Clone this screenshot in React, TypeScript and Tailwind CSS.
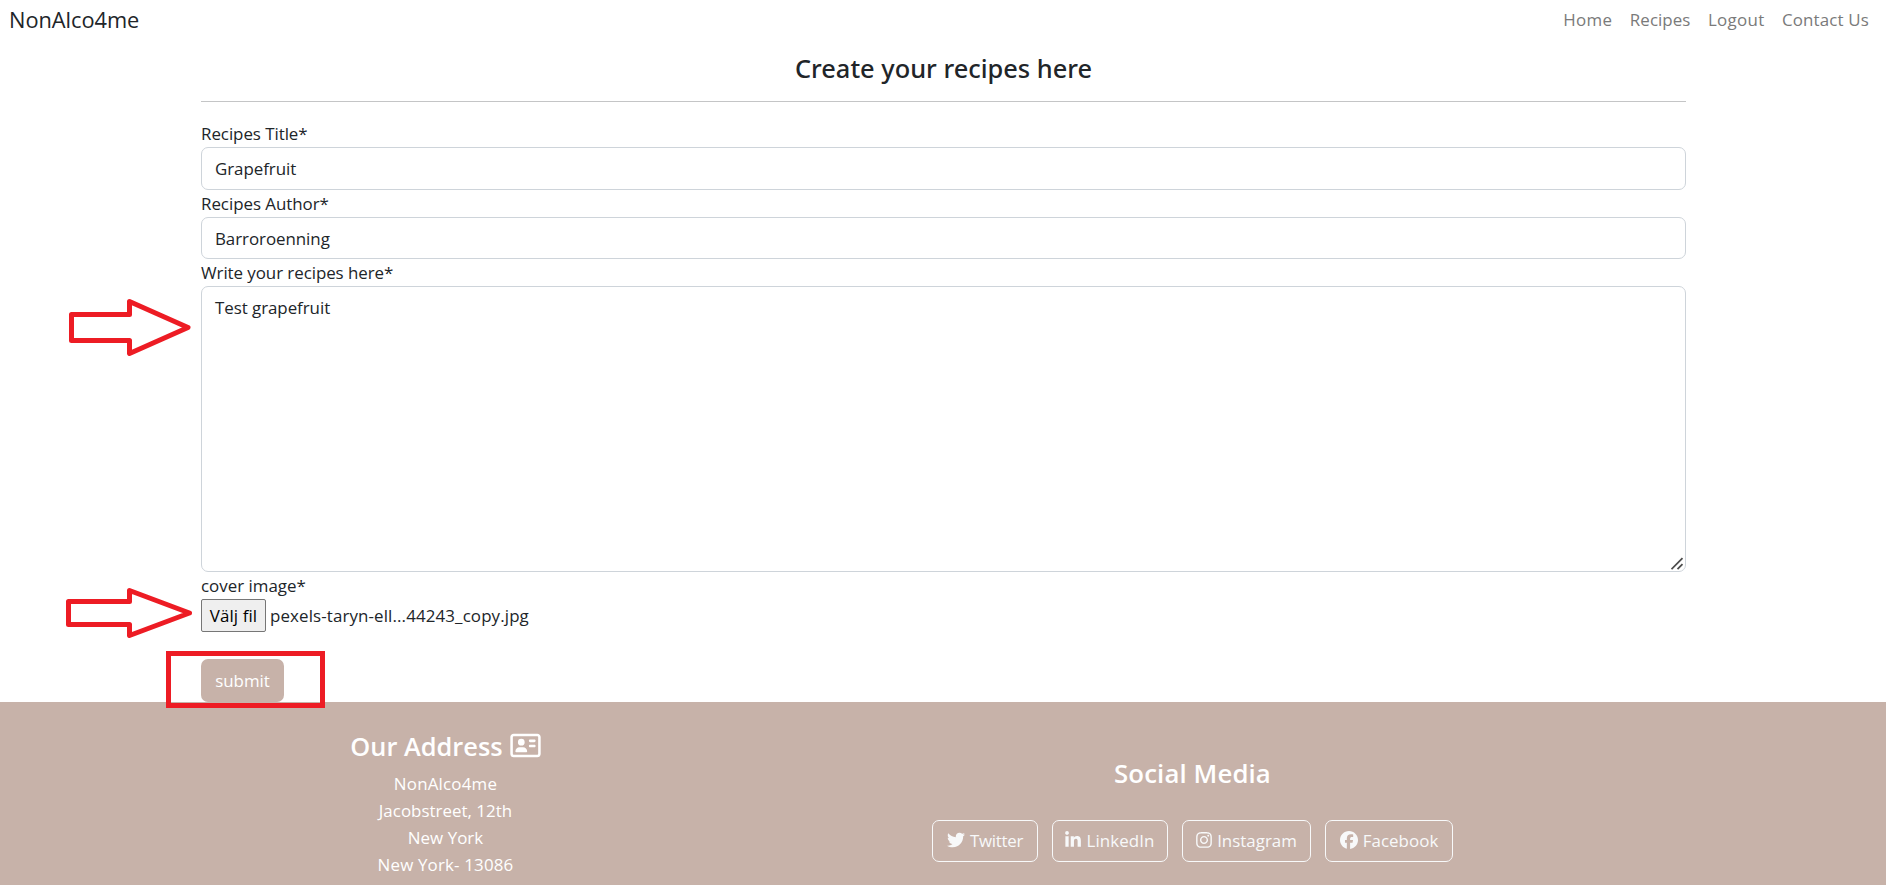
import type { ComponentType } from "react";
import { FaFacebook, FaInstagram, FaLinkedinIn, FaRegAddressCard, FaTwitter } from "react-icons/fa6";

const navLinks = [
  { label: "Home", style: "tracking-[0.3px]" },
  { label: "Recipes", style: "tracking-[0.06px]" },
  { label: "Logout", style: "tracking-[0.3px]" },
  { label: "Contact Us", style: "tracking-[0.15px]" },
];

const address = [
  { text: "NonAlco4me", style: "tracking-[0.2px]" },
  { text: "Jacobstreet, 12th", style: "tracking-[0.02px]" },
  { text: "New York", style: "tracking-[0.04px]" },
  { text: "New York- 13086", style: "tracking-[0.17px]" },
];

const socials: { label: string; Icon: ComponentType<{ className?: string }>; box: string; icon: string; text: string }[] = [
  { label: "Twitter", Icon: FaTwitter, box: "w-[106px]", icon: "w-[18px]", text: "tracking-[-0.3px]" },
  { label: "LinkedIn", Icon: FaLinkedinIn, box: "w-[116px]", icon: "w-[16px]", text: "tracking-[0.1px]" },
  { label: "Instagram", Icon: FaInstagram, box: "w-[129px]", icon: "w-[16px]", text: "" },
  { label: "Facebook", Icon: FaFacebook, box: "w-[128px]", icon: "w-[18px]", text: "tracking-[0.05px]" },
];

const control =
  "block w-full rounded-[7px] border border-[#ced4da] bg-white px-[13px] text-[16.92px] leading-[27px] tracking-[-0.05px] text-[#212529] outline-none";

function Arrow({ points, className }: { points: string; className: string }) {
  return (
    <svg className={className} fill="none" stroke="#ed1c24" strokeWidth="5" strokeLinejoin="round">
      <polygon points={points} />
    </svg>
  );
}

export default function App() {
  return (
    <div className="relative flex h-[885px] w-full flex-col overflow-hidden bg-white font-['Open_Sans','Noto_Sans',sans-serif] text-[16.92px] leading-[27px] text-[#212529]">
      <header className="flex h-[40px] shrink-0 items-center justify-between pr-[17px] pl-[9px]">
        <a className="text-[21.8px] leading-[34px] tracking-[-0.03px]">NonAlco4me</a>
        <nav className="mb-[2px] flex gap-[17.5px] text-[#7a7a7a]">
          {navLinks.map((l) => (
            <a key={l.label} className={l.style}>{l.label}</a>
          ))}
        </nav>
      </header>

      <main className="mr-[200px] ml-[201px] flex h-[662px] shrink-0 flex-col">
        <h1 className="mt-[12px] text-center font-['Noto_Sans','Open_Sans',sans-serif] text-[25.38px] leading-[32px] font-medium">
          Create your recipes here
        </h1>
        <hr className="mt-[17px] border-0 border-t border-[#c4c5c6]" />
        <form className="mt-[18px] flex flex-col" onSubmit={(e) => e.preventDefault()}>
          <label className="h-[27px] tracking-[-0.05px]">Recipes Title*</label>
          <input className={`${control} h-[43px]`} defaultValue="Grapefruit" />
          <label className="h-[27px] tracking-[-0.04px]">Recipes Author*</label>
          <input className={`${control} h-[42px]`} defaultValue="Barroroenning" />
          <label className="h-[27px] tracking-[-0.06px]">Write your recipes here*</label>
          <div className="relative h-[286px]">
            <textarea className={`${control} h-full resize-none py-[7px]`} defaultValue="Test grapefruit" />
            <svg className="absolute right-[2px] bottom-[2px] h-[13px] w-[13px]" stroke="#4d4d4d" strokeWidth="1.8">
              <path d="M0.5 12.2 L11.5 1.2 M6.5 12.2 L11.5 7.2" />
            </svg>
          </div>
          <label className="h-[27px]">cover image*</label>
          <div className="flex h-[33px] items-center gap-[4px]">
            <button type="button" className="h-[33px] w-[65px] rounded-[2px] border border-[#767676] bg-[#efefef] tracking-[0.09px] text-black">
              Välj fil
            </button>
            <span className="tracking-[0.12px]">pexels-taryn-ell...44243_copy.jpg</span>
          </div>
          <button type="submit" className="mt-[27px] h-[43px] w-[83px] rounded-[7px] bg-[#c7b2a9] text-white">
            submit
          </button>
        </form>
      </main>

      <footer className="grid flex-1 grid-cols-[891px_603px] bg-[#c7b2a9] text-center text-white">
        <section className="pt-[28px]">
          <h2 className="flex h-[40px] items-start justify-center gap-[7px] text-[25.38px] leading-[32px] font-semibold">
            Our Address
            <FaRegAddressCard className="mt-[2px] h-[27px] w-[31px]" />
          </h2>
          {address.map((a) => (
            <p key={a.text} className={a.style}>{a.text}</p>
          ))}
        </section>
        <section className="pt-[55px]">
          <h2 className="text-[25.8px] leading-[32px] font-semibold tracking-[0.1px]">Social Media</h2>
          <div className="mt-[31px] flex justify-center gap-[14px] text-[#f8f9fa]">
            {socials.map(({ label, Icon, box, icon, text }) => (
              <a key={label} className={`flex h-[42px] items-center justify-center gap-[5px] rounded-[7px] border border-[#f8f9fa] pb-[2px] ${box}`}>
                <Icon className={`h-[18px] ${icon}`} />
                <span className={text}>{label}</span>
              </a>
            ))}
          </div>
        </section>
      </footer>

      <Arrow className="absolute top-[290px] left-[60px] h-[75px] w-[140px]" points="11.5,24.5 69.5,24.5 69.5,11.5 128,37.5 69.5,63.5 69.5,50.5 11.5,50.5" />
      <Arrow className="absolute top-[580px] left-[60px] h-[70px] w-[140px]" points="8.5,21.5 69.5,21.5 69.5,10.5 129.5,33 69.5,55.5 69.5,44.5 8.5,44.5" />
      <div className="absolute top-[651px] left-[166px] h-[57px] w-[159px] border-[5px] border-[#ed1c24]" />
    </div>
  );
}
